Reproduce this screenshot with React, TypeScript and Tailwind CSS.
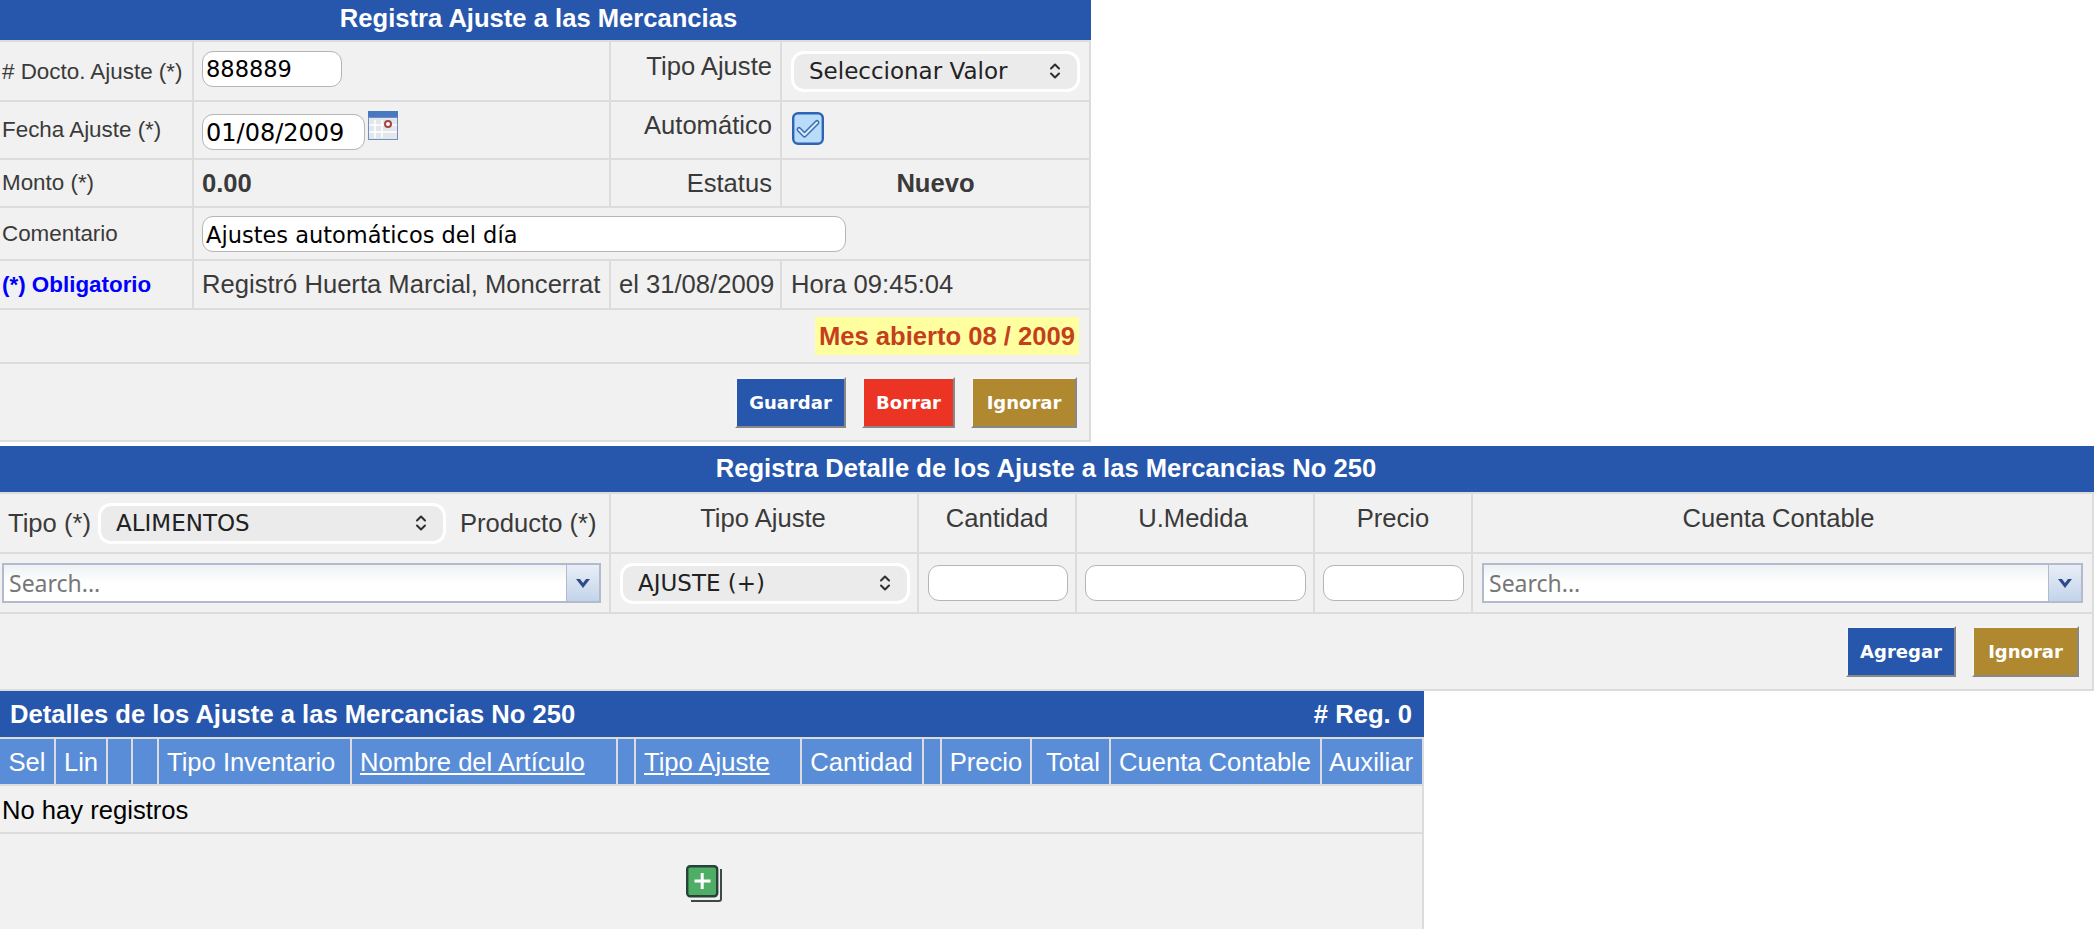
import { ReactNode } from 'react';

const cell = 'border-b-2 border-r-2 border-[#dcdcdc] p-0';
const arial = "font-['Liberation_Sans',Arial,sans-serif]";

function Chevrons() {
  return (
    <svg width="14" height="20" viewBox="0 0 14 20" fill="none" stroke="#2e2e2e" strokeWidth="2" strokeLinecap="round" strokeLinejoin="round">
      <path d="M3 7.5 7 3.5l4 4" />
      <path d="M3 12.5l4 4 4-4" />
    </svg>
  );
}

// Safari style select
function SelectBox({ label, className }: { label: string; className: string }) {
  return (
    <div className={`flex h-[41px] items-center justify-between rounded-[13px] border-[3px] border-white bg-[#ebebeb] pl-[15px] pr-[15px] font-['DejaVu_Sans',sans-serif] text-[23px] text-[#222] ${className}`}>
      <span className="pt-[1px]">{label}</span>
      <Chevrons />
    </div>
  );
}

function TextInput({ value, className }: { value?: string; className: string }) {
  return (
    <input
      readOnly
      value={value ?? ''}
      className={`block h-[36px] rounded-[11px] border border-[#b5b5b5] bg-white px-[3px] font-['DejaVu_Sans',sans-serif] text-[22.5px] text-black outline-none ${className}`}
    />
  );
}

function SearchBox({ className }: { className: string }) {
  return (
    <div className={`flex h-[40px] border-2 border-[#b4bacd] bg-gradient-to-b from-[#eef1f3] via-white to-white ${className}`}>
      <span className="flex-1 pl-[5px] font-['Noto_Sans',sans-serif] text-[23px] leading-[36px] text-[#777]">Search...</span>
      <span className="flex w-[33px] items-center justify-center border-l border-[#b4bacd] bg-gradient-to-b from-[#e8eef6] to-[#c3d4ea]">
        <svg width="18" height="12" viewBox="0 0 18 12">
          <path d="M2 2h4l3 4 3-4h4l-7 9z" fill="#2f4a8a" />
        </svg>
      </span>
    </div>
  );
}

function ActionButton({ children, color, className }: { children: ReactNode; color: string; className: string }) {
  return (
    <button className={`h-[51px] border-2 border-t-[#f4f4f4] border-l-[#f4f4f4] border-r-[#888] border-b-[#888] font-['DejaVu_Sans',sans-serif] text-[18px] font-bold text-white ${color} ${className}`}>
      {children}
    </button>
  );
}

function CalendarIcon() {
  return (
    <svg width="30" height="29" viewBox="0 0 30 29" className="mb-[10px] ml-[3px] shrink-0">
      <rect width="30" height="29" fill="#6f8fc4" />
      <rect x="0" y="0" width="30" height="6" fill="#4a78c0" />
      <rect x="1" y="7" width="28" height="21" fill="#e3e6ea" />
      <path d="M7 9v18M14 9v18M1 14h28M1 21h28" stroke="#fff" strokeWidth="1.5" />
      <circle cx="20" cy="13" r="3" fill="#fff" stroke="#a8433f" strokeWidth="2" />
    </svg>
  );
}

function CheckIcon() {
  return (
    <svg width="32" height="33" viewBox="0 0 32 33" className="ml-[10px] mt-[-3px]">
      <rect x="1.2" y="1.2" width="29.6" height="30.6" rx="5" fill="#b9dcf9" stroke="#2f63b6" strokeWidth="2.4" />
      <path d="M7 17.5l5.5 5.5L25 10.5" fill="none" stroke="#3d6cb8" strokeWidth="5" strokeLinejoin="round" strokeLinecap="round" />
      <path d="M7 17.5l5.5 5.5L25 10.5" fill="none" stroke="#d9edfc" strokeWidth="2" strokeLinejoin="round" strokeLinecap="round" />
    </svg>
  );
}

function AddIcon() {
  return (
    <svg width="37" height="37" viewBox="0 0 37 37">
      <path d="M35 4v30a2 2 0 0 1-2 2H5" fill="none" stroke="#3a4a44" strokeWidth="2" />
      <rect x="1.2" y="1.2" width="30" height="30" rx="3" fill="#4fae66" stroke="#27423a" strokeWidth="2.4" />
      <path d="M16.2 8v16M8.5 16h16" stroke="#fff" strokeWidth="3" />
    </svg>
  );
}

function AjusteForm() {
  return (
    <div className={`w-[1091px] ${arial} text-[#3a3a3a]`}>
      <div className="h-[40px] bg-[#2757ac] pr-[14px] text-center text-[25.6px] font-bold leading-[37px] text-white">Registra Ajuste a las Mercancias</div>
      <table className="w-full table-fixed border-separate border-spacing-0 border-t-2 border-[#dcdcdc] bg-[#f1f1f1] text-[22.4px]">
        <colgroup>
          <col className="w-[194px]" />
          <col className="w-[417px]" />
          <col className="w-[171px]" />
          <col />
        </colgroup>
        <tbody>
          <tr className="h-[60px]">
            <td className={`${cell} pl-[2px] pt-[2px]`}>
              # Docto. Ajuste (*)
            </td>
            <td className={cell}>
              <TextInput value="888889" className="mb-[4px] ml-[8px] w-[140px]" />
            </td>
            <td className={`${cell} pb-[10px] pr-[8px] text-right text-[25.6px]`}>Tipo Ajuste</td>
            <td className={cell}>
              <SelectBox label="Seleccionar Valor" className="ml-[9px] w-[289px]" />
            </td>
          </tr>
          <tr className="h-[58px]">
            <td className={`${cell} pl-[2px]`}>Fecha Ajuste (*)</td>
            <td className={cell}>
              <div className="flex items-end pl-[8px]">
                <TextInput value="01/08/2009" className="w-[163px] pt-[2px] text-[24px]" />
                <CalendarIcon />
              </div>
            </td>
            <td className={`${cell} pb-[9px] pr-[8px] text-right text-[25.6px]`}>Automático</td>
            <td className={cell}>
              <CheckIcon />
            </td>
          </tr>
          <tr className="h-[48px]">
            <td className={`${cell} pl-[2px]`}>Monto (*)</td>
            <td className={`${cell} pl-[8px] text-[25.6px] font-bold`}>0.00</td>
            <td className={`${cell} pr-[8px] text-right text-[25.6px]`}>Estatus</td>
            <td className={`${cell} text-center text-[25.6px] font-bold`}>Nuevo</td>
          </tr>
          <tr className="h-[53px]">
            <td className={`${cell} pl-[2px] pt-[1px]`}>Comentario</td>
            <td className={cell} colSpan={3}>
              <TextInput value="Ajustes automáticos del día" className="ml-[8px] w-[644px] pt-[2px]" />
            </td>
          </tr>
          <tr className="h-[49px]">
            <td className={`${cell} pl-[2px] font-bold text-[#0000ff]`}>(*) Obligatorio</td>
            <td className={`${cell} pl-[8px] text-[25.6px]`}>Registró Huerta Marcial, Moncerrat</td>
            <td className={`${cell} pl-[8px] text-[25.6px]`}>el 31/08/2009</td>
            <td className={`${cell} pl-[9px] text-[25.6px]`}>Hora 09:45:04</td>
          </tr>
          <tr className="h-[54px]">
            <td className={`${cell} pr-[10px] text-right`} colSpan={4}>
              <span className="inline-block h-[38px] w-[264px] bg-[#ffffa0] text-center text-[25.6px] font-bold leading-[38px] text-[#c43f1d]">Mes abierto 08 / 2009</span>
            </td>
          </tr>
          <tr className="h-[78px]">
            <td className={cell} colSpan={4}>
              <div className="flex justify-end gap-[16px] pr-[12px]">
                <ActionButton color="bg-[#2757ac]" className="w-[111px]">Guardar</ActionButton>
                <ActionButton color="bg-[#ec3424]" className="w-[93px]">Borrar</ActionButton>
                <ActionButton color="bg-[#b08830]" className="w-[106px]">Ignorar</ActionButton>
              </div>
            </td>
          </tr>
        </tbody>
      </table>
    </div>
  );
}

function DetalleForm() {
  return (
    <div className={`mt-[4px] w-[2094px] ${arial} text-[#3a3a3a]`}>
      <div className="h-[46px] bg-[#2757ac] pr-[2px] text-center text-[25.6px] font-bold leading-[45px] text-white">Registra Detalle de los Ajuste a las Mercancias No 250</div>
      <table className="w-full table-fixed border-separate border-spacing-0 border-t-2 border-[#dcdcdc] bg-[#f1f1f1] text-[25.6px]">
        <colgroup>
          <col className="w-[611px]" />
          <col className="w-[308px]" />
          <col className="w-[158px]" />
          <col className="w-[238px]" />
          <col className="w-[158px]" />
          <col />
        </colgroup>
        <tbody>
          <tr className="h-[60px] text-center">
            <td className={cell}>
              <div className="flex items-center pl-[8px]">
                <span>Tipo (*)</span>
                <SelectBox label="ALIMENTOS" className="ml-[7px] w-[348px]" />
                <span className="ml-[14px]">Producto (*)</span>
              </div>
            </td>
            <td className={`${cell} pb-[10px] pr-[2px]`}>Tipo Ajuste</td>
            <td className={`${cell} pb-[10px]`}>Cantidad</td>
            <td className={`${cell} pb-[10px] pr-[4px]`}>U.Medida</td>
            <td className={`${cell} pb-[10px]`}>Precio</td>
            <td className={`${cell} pb-[10px] pr-[8px]`}>Cuenta Contable</td>
          </tr>
          <tr className="h-[60px]">
            <td className={cell}>
              <SearchBox className="ml-[2px] w-[599px]" />
            </td>
            <td className={cell}>
              <SelectBox label="AJUSTE (+)" className="ml-[9px] w-[290px]" />
            </td>
            <td className={cell}>
              <TextInput className="ml-[9px] w-[140px]" />
            </td>
            <td className={cell}>
              <TextInput className="ml-[8px] w-[221px]" />
            </td>
            <td className={cell}>
              <TextInput className="ml-[8px] w-[141px]" />
            </td>
            <td className={cell}>
              <SearchBox className="ml-[9px] w-[601px]" />
            </td>
          </tr>
          <tr className="h-[77px]">
            <td className={cell} colSpan={6}>
              <div className="flex justify-end gap-[16px] pr-[13px]">
                <ActionButton color="bg-[#2757ac]" className="w-[110px]">Agregar</ActionButton>
                <ActionButton color="bg-[#b08830]" className="w-[107px]">Ignorar</ActionButton>
              </div>
            </td>
          </tr>
        </tbody>
      </table>
    </div>
  );
}

const columns = [
  { title: 'Sel', width: 'w-[56px]', cls: 'text-center' },
  { title: 'Lin', width: 'w-[52px]', cls: 'text-center' },
  { title: '', width: 'w-[25px]', cls: '' },
  { title: '', width: 'w-[26px]', cls: '' },
  { title: 'Tipo Inventario', width: 'w-[193px]', cls: 'pl-[8px] text-left' },
  { title: 'Nombre del Artículo', width: 'w-[266px]', cls: 'pl-[8px] text-left underline' },
  { title: '', width: 'w-[18px]', cls: '' },
  { title: 'Tipo Ajuste', width: 'w-[166px]', cls: 'pl-[8px] text-left underline' },
  { title: 'Cantidad', width: 'w-[122px]', cls: 'pr-[1px] text-center' },
  { title: '', width: 'w-[18px]', cls: '' },
  { title: 'Precio', width: 'w-[90px]', cls: 'text-center' },
  { title: 'Total', width: 'w-[79px]', cls: 'pr-[9px] text-right' },
  { title: 'Cuenta Contable', width: 'w-[211px]', cls: 'pr-[1px] text-center' },
  { title: 'Auxiliar', width: '', cls: 'pr-[2px] text-center' },
];

function DetallesTable() {
  return (
    <div className={`w-[1424px] ${arial}`}>
      <div className="flex h-[46px] items-center justify-between bg-[#2757ac] pl-[10px] pr-[12px] text-[25.6px] font-bold text-white">
        <span>Detalles de los Ajuste a las Mercancias No 250</span>
        <span># Reg. 0</span>
      </div>
      <table className="w-full table-fixed border-separate border-spacing-0 border-t-2 border-[#dcdcdc] bg-[#f1f1f1] text-[25.6px]">
        <colgroup>
          {columns.map((c, i) => (
            <col key={i} className={c.width} />
          ))}
        </colgroup>
        <thead>
          <tr className="h-[47px] bg-[#5a8dd8] text-white">
            {columns.map((c, i) => (
              <th key={i} className={`${cell} whitespace-nowrap pt-[2px] font-normal ${c.cls}`}>{c.title}</th>
            ))}
          </tr>
        </thead>
        <tbody>
          <tr className="h-[48px]">
            <td className={`${cell} pl-[2px] pt-[2px] text-black`} colSpan={14}>No hay registros</td>
          </tr>
        </tbody>
      </table>
      <div className="flex h-[95px] items-start justify-center border-r-2 border-[#dcdcdc] bg-[#f1f1f1] pr-[14px] pt-[31px]">
        <AddIcon />
      </div>
    </div>
  );
}

export default function App() {
  return (
    <div className="h-[930px] overflow-hidden bg-white">
      <AjusteForm />
      <DetalleForm />
      <DetallesTable />
    </div>
  );
}
